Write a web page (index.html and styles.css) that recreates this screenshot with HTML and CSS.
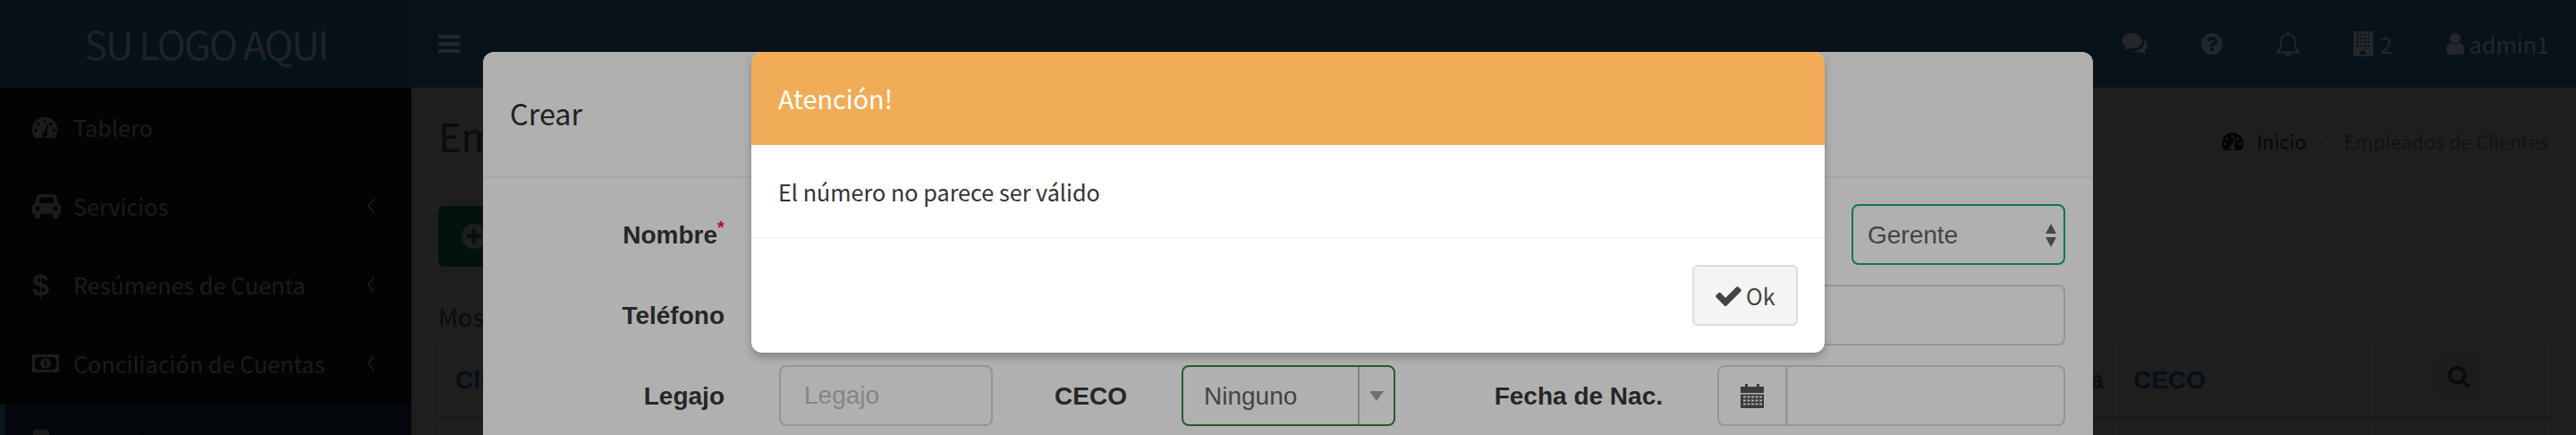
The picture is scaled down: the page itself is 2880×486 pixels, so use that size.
FILE: index.html
```html
<!DOCTYPE html>
<html lang="es">
<head>
<meta charset="utf-8">
<title>Empleados de Clientes</title>
<link rel="stylesheet" href="styles.css">
</head>
<body>
<svg class="defs" width="0" height="0">
  <symbol id="gauge" viewBox="0 0 28 23">
    <path fill-rule="evenodd" d="M14 0A14 14 0 0 0 0 14c0 3.500 1 6.500 2.800 9h22.400C27 20.500 28 17.500 28 14A14 14 0 0 0 14 0ZM14 3a1.800 1.800 0 1 1 0 3.600A1.800 1.800 0 0 1 14 3ZM7 6a1.800 1.800 0 1 1 0 3.600A1.800 1.800 0 0 1 7 6ZM21 6a1.800 1.800 0 1 1 0 3.600A1.800 1.800 0 0 1 21 6ZM4 13a1.800 1.800 0 1 1 0 3.600A1.800 1.800 0 0 1 4 13ZM24 13a1.800 1.800 0 1 1 0 3.600A1.800 1.800 0 0 1 24 13ZM17 7.500l1.400.5-2.400 9.200a3 3 0 1 1-2.700-.6Z"/>
  </symbol>
  <symbol id="chev" viewBox="0 0 10 20">
    <path d="M8.500 2 1.500 10l7 8" fill="none" stroke="currentColor" stroke-width="1.800"/>
  </symbol>
</svg>
<div class="app">
  <header class="topbar">
    <div class="logo">SU LOGO AQUI</div>
    <div class="burger"><i></i><i></i><i></i></div>
    <nav class="topnav">
      <svg class="ic-chat" viewBox="0 0 29 24"><path d="M11.500 0C17.800 0 23 3.800 23 8.700s-5.200 8.700-11.500 8.700c-1.200 0-2.300-.1-3.400-.4C6.500 18.100 4.500 19 2 19.400c1.200-1.200 2-2.600 2.300-4.300C1.700 13.500 0 11.300 0 8.700 0 3.800 5.200 0 11.500 0Z"/><path d="M24.500 7.500C27.200 9 29 11.300 29 14c0 2.400-1.400 4.400-3.500 5.800.2 1.500 1 2.900 2.100 4-2.400-.3-4.500-1.300-6-2.600-1 .2-2 .3-3 .3-2.400 0-4.600-.6-6.400-1.600 7 .3 13-3.800 13-9.400 0-1.100-.3-2.100-.7-3Z"/></svg>
      <svg class="ic-q" viewBox="128 128 1536 1536"><path d="M1024 1376v-192q0-14-9-23t-23-9h-192q-14 0-23 9t-9 23v192q0 14 9 23t23 9h192q14 0 23-9t9-23zm256-672q0-88-55.500-163t-138.500-116-170-41q-243 0-371 213-15 24 8 42l132 100q7 6 19 6 16 0 25-12 53-68 86-92 34-24 86-24 48 0 85.500 26t37.500 59q0 38-20 61t-68 45q-63 28-115.500 86.500t-52.500 125.500v36q0 14 9 23t23 9h192q14 0 23-9t9-23q0-19 21.500-49.500t54.500-49.500q32-18 49-28.500t46-35 44.500-48 28-60.500 12.500-81zm384 192q0 209-103 385.500t-279.500 279.500-385.500 103-385.500-103-279.500-279.500-103-385.500 103-385.500 279.500-279.500 385.500-103 385.500 103 279.500 279.500 103 385.500z"/></svg>
      <svg class="ic-bell" viewBox="0 0 26 28"><path fill="none" stroke="currentColor" stroke-width="2" d="M1 23.500c3-3 4-5.500 4-11C5 7 8.500 3.500 13 3.500S21 7 21 12.500c0 5.500 1 8 4 11Z"/><path d="M11.500 1.500a1.500 1.500 0 0 1 3 0v2.500h-3ZM10 25h6a3 3 0 0 1-6 0Z"/></svg>
      <span class="nav-count">
        <svg class="ic-bld" viewBox="0 0 22 28"><path fill-rule="evenodd" d="M0 0h22v28H0ZM4 3v2h2V3Zm4 0v2h2V3Zm4 0v2h2V3Zm4 0v2h2V3ZM4 7v2h2V7Zm4 0v2h2V7Zm4 0v2h2V7Zm4 0v2h2V7ZM4 11v2h2v-2Zm4 0v2h2v-2Zm4 0v2h2v-2Zm4 0v2h2v-2ZM4 15v2h2v-2Zm4 0v2h2v-2Zm4 0v2h2v-2Zm4 0v2h2v-2ZM8 22v4h6v-4Z"/></svg>
        <span>2</span>
      </span>
      <span class="nav-user">
        <svg class="ic-user" viewBox="256 128 1280 1536" preserveAspectRatio="none"><path d="M1536 1399q0 109-62.500 187t-150.500 78h-854q-88 0-150.500-78t-62.500-187q0-85 8.500-160.500t31.500-152 58.500-131 94-89 134.500-34.500q131 128 313 128t313-128q76 0 134.500 34.500t94 89 58.500 131 31.500 152 8.500 160.500zm-256-887q0 159-112.500 271.500t-271.500 112.500-271.500-112.500-112.500-271.500 112.500-271.500 271.500-112.500 271.500 112.500 112.500 271.500z"/></svg>
        <span>admin1</span>
      </span>
    </nav>
  </header>

  <div class="main">
    <aside class="sidebar">
      <ul class="menu">
        <li class="item"><span class="ic-slot"><svg class="ic-side-gauge"><use href="#gauge"/></svg></span><span>Tablero</span></li>
        <li class="item"><span class="ic-slot"><svg class="ic-car" viewBox="0 0 32 28"><path fill-rule="evenodd" d="M8 1h16c1.500 0 2.500 1 3 2.500L29 11c2 1 3 2.500 3 4.500V23h-3v3a2 2 0 0 1-2 2h-2a2 2 0 0 1-2-2v-3H9v3a2 2 0 0 1-2 2H5a2 2 0 0 1-2-2v-3H0v-7.500C0 13.500 1 12 3 11l2-7.500C5.500 2 6.500 1 8 1Zm.800 3.500L7.300 11h17.400l-1.500-6.500ZM6 14.500a2.500 2.500 0 1 0 0 5 2.500 2.500 0 0 0 0-5Zm20 0a2.500 2.500 0 1 0 0 5 2.500 2.500 0 0 0 0-5Z"/></svg></span><span>Servicios</span><svg class="chev"><use href="#chev"/></svg></li>
        <li class="item"><span class="ic-slot"><span class="dollar">$</span></span><span>Resúmenes de Cuenta</span><svg class="chev"><use href="#chev"/></svg></li>
        <li class="item"><span class="ic-slot"><svg class="ic-money" viewBox="0 0 30 20"><path fill-rule="evenodd" d="M0 0h30v20H0Zm6 3-3 3v8l3 3h18l3-3V6l-3-3ZM15 4a6 6 0 1 1 0 12 6 6 0 0 1 0-12Zm-1 3v1h-1v1h1v3h-1v1h4v-1h-1V7Z"/></svg></span><span>Conciliación de Cuentas</span><svg class="chev"><use href="#chev"/></svg></li>
        <li class="item item-active"><span class="ic-slot"><svg class="ic-last" viewBox="0 0 20 28"><rect width="18" height="28" x="1" rx="3"/></svg></span><span>Usuarios</span></li>
      </ul>
    </aside>

    <section class="content">
      <div class="content-head">
        <h1 class="title">Empleados de Clientes</h1>
        <div class="crumbs">
          <svg class="ic-crumb"><use href="#gauge"/></svg>
          <span class="crumb-home">Inicio</span>
          <span class="crumb-sep">&gt;</span>
          <span class="crumb-now">Empleados de Clientes</span>
        </div>
      </div>
      <button class="btn-new">
        <svg class="ic-plus" viewBox="128 128 1536 1536"><path d="M1344 960v-128q0-26-19-45t-45-19h-256v-256q0-26-19-45t-45-19h-128q-26 0-45 19t-19 45v256h-256q-26 0-45 19t-19 45v128q0 26 19 45t45 19h256v256q0 26 19 45t45 19h128q26 0 45-19t19-45v-256h256q26 0 45-19t19-45zm320-64q0 209-103 385.500t-279.500 279.500-385.500 103-385.500-103-279.500-279.500-103-385.500 103-385.500 279.500-279.500 385.500-103 385.500 103 279.500 279.500 103 385.500z"/></svg>
        <span>Crear</span>
      </button>
      <p class="show">Mostrar</p>
      <table class="grid">
        <colgroup><col class="c1"><col class="c2"><col class="c3"><col class="c4"></colgroup>
        <thead>
          <tr><th>Cliente</th><th>Categoría</th><th>CECO</th><th class="th-tool"><span class="btn-search"><svg class="ic-search" viewBox="64 128 1664 1664"><path d="M1216 832q0-185-131.500-316.500t-316.500-131.500-316.500 131.500-131.500 316.500 131.500 316.500 316.500 131.500 316.500-131.500 131.500-316.500zm512 832q0 52-38 90t-90 38q-54 0-90-38l-343-342q-179 124-399 124-143 0-273.500-55.500t-225-150-150-225-55.500-273.500 55.500-273.500 150-225 225-150 273.500-55.500 273.500 55.500 225 150 150 225 55.500 273.500q0 220-124 399l343 343q37 37 37 90z"/></svg></span></th></tr>
        </thead>
        <tbody><tr><td></td><td></td><td></td><td></td></tr></tbody>
      </table>
    </section>
  </div>

  <div class="modal modal-form">
    <div class="form-head">Crear</div>
    <form class="form-grid">
      <label class="lab">Nombre<sup class="req">*</sup></label>
      <div class="select sel-rol"><span>Gerente</span>
        <svg class="updown" viewBox="0 0 12 26"><path d="M6 0l6 11H0ZM0 15h12L6 26Z"/></svg>
      </div>
      <label class="lab">Teléfono</label>
      <input class="field field-wide" type="text">
      <label class="lab">Legajo</label>
      <input class="field" type="text" placeholder="Legajo">
      <label class="lab">CECO</label>
      <div class="select sel-ceco"><span class="sel-text">Ninguno</span><span class="sel-arrow"><i></i></span></div>
      <label class="lab">Fecha de Nac.</label>
      <div class="date">
        <span class="addon"><svg class="ic-cal" viewBox="0 0 26 28"><path fill-rule="evenodd" d="M0 4h5V1h3v3h10V1h3v3h5v7H0Zm0 8.500h26V28H0Zm3 2v2h3v-2Zm4.500 0v2h3v-2Zm4.500 0v2h3v-2Zm4.500 0v2h3v-2Zm4.500 0v2h3v-2ZM3 18.500v2h3v-2Zm4.500 0v2h3v-2Zm4.500 0v2h3v-2Zm4.500 0v2h3v-2Zm4.500 0v2h3v-2ZM3 22.500v2h3v-2Zm4.500 0v2h3v-2Zm4.500 0v2h3v-2Zm4.500 0v2h3v-2Zm4.500 0v2h3v-2Z"/></svg></span>
        <input class="field date-input" type="text">
      </div>
    </form>
  </div>

  <div class="modal modal-alert">
    <div class="alert-head">Atención!</div>
    <div class="alert-body">El número no parece ser válido</div>
    <div class="alert-foot">
      <button class="btn-ok">
        <svg class="ic-check" viewBox="121 272 1550 1250"><path d="M1671 566q0 40-28 68l-724 724-136 136q-28 28-68 28t-68-28l-136-136-362-362q-28-28-28-68t28-68l136-136q28-28 68-28t68 28l294 295 656-657q28-28 68-28t68 28l136 136q28 28 28 68z"/></svg>
        <span>Ok</span>
      </button>
    </div>
  </div>
</div>
</body>
</html>
```
FILE: styles.css
```css
* { box-sizing: border-box; }
html, body { margin: 0; padding: 0; background: #1e1e1e; }
body { font-family: "Noto Sans CJK SC", "Source Sans Pro", sans-serif; font-size: 25.2px; line-height: 40px; }
svg { fill: currentColor; display: block; flex: none; }
.defs { position: absolute; }
.app { position: relative; width: 2880px; height: 486px; overflow: hidden; background: #1e1e1e; }

/* top bar */
.topbar { display: flex; align-items: center; height: 98px; background: #07121a; color: #23272a; }
.logo { width: 460px; text-align: center; font-size: 43.5px; letter-spacing: -2px; line-height: 96px; background: #06111a; color: #1f2226; }
.burger { display: flex; flex-direction: column; gap: 4px; margin-left: 30px; }
.burger i { display: block; width: 24px; height: 4px; background: #23262a; }
.topnav { display: flex; align-items: center; gap: 60px; margin-left: auto; padding-right: 30px; }
.ic-chat { width: 29px; height: 24px; }
.ic-q { width: 24px; height: 24px; }
.ic-bell { width: 26px; height: 28px; }
.ic-bld { width: 22px; height: 28px; }
.ic-user { width: 20px; height: 24px; }
.nav-count, .nav-user { display: flex; align-items: center; gap: 8px; }
.nav-user { gap: 6px; }

/* layout below the bar */
.main { display: flex; height: 388px; }
.sidebar { width: 460px; flex: none; background: #020403; color: #1a1c1e; }
.menu { list-style: none; margin: 0; padding: 1px 0 0; }
.item { display: flex; align-items: center; height: 88px; padding: 0 0 2px 36px; }
.ic-slot { width: 46px; flex: none; display: flex; align-items: center; }
.ic-side-gauge { width: 28px; height: 23px; }
.ic-car { width: 32px; height: 28px; }
.ic-money { width: 30px; height: 20px; }
.ic-last { width: 20px; height: 28px; color: #1a1a1a; }
.dollar { font: bold 34px/40px "Liberation Sans", sans-serif; }
.chev { width: 10px; height: 20px; margin-left: auto; margin-right: 40px; }
.item-active { background: #03060b; box-shadow: inset 6px 0 0 #07131d; }

/* page content */
.content { flex: 1; min-width: 0; padding: 0 31px 0 30px; }
.content-head { display: flex; justify-content: space-between; align-items: center; height: 102px; padding-top: 6px; }
.title { margin: 0; font-size: 43.500px; line-height: 60px; font-weight: 400; color: #0b0b0b; }
.crumbs { display: flex; align-items: center; font-size: 21.600px; color: #121212; margin-top: 11px; }
.ic-crumb { width: 24px; height: 20px; color: #050505; margin-right: 15px; }
.crumb-home { color: #090909; }
.crumb-sep { color: #262626; margin: 0 16px 0 14px; }
.btn-new { display: flex; align-items: center; gap: 14px; width: 300px; height: 68px; margin: 30px 0 0; padding: 0 26px; border: 0; border-radius: 6px; background: #03130c; color: #1e1e1e; font: inherit; }
.ic-plus { width: 28px; height: 28px; }
.show { margin: 0; height: 83px; padding-top: 36px; font-size: 27px; color: #0b0b0b; }
.grid { width: 2359px; table-layout: fixed; border-collapse: collapse; font: bold 28px/40px "Liberation Sans", sans-serif; color: #06101a; }
.c1 { width: 1714px; }
.c2 { width: 162px; }
.c3 { width: 284px; }
.c4 { width: 199px; }
.grid th { height: 84px; padding: 2px 17px 0; text-align: left; border: 2px solid #202020; border-bottom: 3px solid #1a1a1a; vertical-align: middle; }
.grid td { height: 60px; border: 2px solid #202020; }
.grid .th-tool { padding: 0; position: relative; }
.btn-search { display: flex; align-items: center; justify-content: center; width: 47px; height: 43px; margin: 0 0 6px 73px; border-radius: 6px; background: #1c1c1c; color: #0a0a0a; }
.ic-search { width: 24px; height: 24px; }

/* modals */
.modal { position: absolute; top: 58px; border-radius: 12px; }
.modal-form { left: 540px; width: 1800px; height: 460px; background: #b0b0b0; color: #262626; }
.form-head { height: 141px; padding: 0 30px; font-size: 32.400px; line-height: 136px; border-bottom: 2px solid #a6a6a6; color: #222; }
.form-grid { display: grid; grid-template-columns: 270px 239px 89px 239px 238px 389px; grid-auto-rows: 68px; column-gap: 61px; row-gap: 22px; padding-top: 29px; font-family: "Liberation Sans", sans-serif; }
.lab { grid-column: 1; display: flex; align-items: center; justify-content: flex-end; padding-top: 2px; font-weight: 700; font-size: 28px; white-space: nowrap; }
.lab:nth-of-type(n+4) { grid-column: auto; }
.req { color: #b3121d; font-size: 20px; line-height: 1; margin-top: -18px; width: 8px; }
.field { min-width: 0; width: 100%; height: 68px; padding: 0 26px; border: 2px solid #959599; border-radius: 8px; background: transparent; font: 28px "Liberation Sans", sans-serif; color: #444; outline: 0; }
.field::placeholder { color: #858585; opacity: 1; }
.field-wide { grid-column: 5 / span 2; }
.select { display: flex; align-items: center; height: 68px; border-radius: 8px; font-size: 28px; color: #444; }
.sel-rol { grid-column: 6; justify-self: end; width: 239px; justify-content: space-between; padding: 2px 8px 0 16px; border: 2px solid #0f7a45; }
.updown { width: 12px; height: 26px; color: #454545; }
.sel-ceco { border: 2px solid #2a5a2e; }
.sel-text { flex: 1; padding: 2px 0 0 23px; }
.sel-arrow { display: flex; align-items: center; justify-content: center; width: 40px; height: 100%; border-left: 2px solid #808080; }
.sel-arrow i { border-style: solid; border-width: 11px 8px 0; border-color: #6e6e6e transparent transparent; }
.date { display: flex; grid-column: 6; }
.addon { display: flex; align-items: center; justify-content: center; width: 78px; height: 68px; border: 2px solid #959599; border-radius: 8px 0 0 8px; flex: none; color: #3a3a3a; }
.ic-cal { width: 26px; height: 28px; }
.date-input { flex: 1; width: auto; margin-left: -1px; border-radius: 0 8px 8px 0; }

.modal-alert { left: 840px; width: 1200px; height: 336px; background: #fff; color: #333; box-shadow: 0 5px 10px rgba(0, 0, 0, .25); }
.alert-head { height: 106px; padding: 0 30px; font-size: 28.800px; line-height: 104px; color: #fff; background: #f0ac57; border-bottom: 2px solid #f4f8f8; border-radius: 12px 12px 0 0; }
.alert-body { height: 103px; padding: 0 30px; line-height: 100px; border-bottom: 2px solid #f4f4f4; }
.alert-foot { display: flex; justify-content: flex-end; padding: 29px 30px 0; }
.btn-ok { display: flex; align-items: center; gap: 5px; width: 118px; height: 68px; padding: 0 0 0 24px; border: 2px solid #ddd; border-radius: 6px; background: #f4f4f4; color: #444; font: inherit; font-size: 25.200px; }
.ic-check { width: 29px; height: 23px; }
```
